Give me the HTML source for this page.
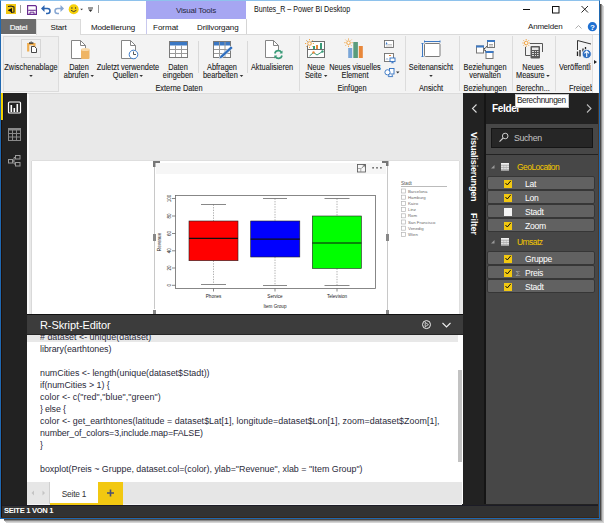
<!DOCTYPE html>
<html><head><meta charset="utf-8">
<style>
*{box-sizing:border-box;margin:0;padding:0}
html,body{width:604px;height:523px;overflow:hidden;background:#fff;font-family:"Liberation Sans",sans-serif;position:relative}
.a{position:absolute}
.t{position:absolute;white-space:nowrap;line-height:1}
.rl{position:absolute;width:120px;text-align:center;font-size:8.4px;line-height:8px;color:#1a1a1a;white-space:nowrap;transform:scaleX(.88);-webkit-text-stroke:.1px #1a1a1a}
.dd{display:inline-block;width:0;height:0;border-left:2px solid transparent;border-right:2px solid transparent;border-top:2px solid #333;margin-left:2px;vertical-align:1px}
.code{font-size:8.9px;color:#2a2a3a;line-height:12px}
.frow{position:absolute;left:487px;width:108px;height:14px;background:#616161;border:1px solid #363636;border-radius:2px}
.chk{position:absolute;left:16px;top:2.5px;width:8px;height:8px;background:#f2c811}
.ftx{position:absolute;left:37px;top:2px;font-size:8.6px;letter-spacing:-.3px;color:#fff;line-height:10px}
</style></head><body>
<div class="a" style="left:600px;top:4px;width:1px;height:516px;background:#4a4846"></div>
<div class="a" style="left:601px;top:4px;width:1px;height:517px;background:#8a8a8a"></div>
<div class="a" style="left:602px;top:5px;width:1px;height:517px;background:#c0c0c0"></div>
<div class="a" style="left:603px;top:6px;width:1px;height:517px;background:#d6d6d6"></div>
<div class="a" style="left:4px;top:519px;width:597px;height:1px;background:#4a4846"></div>
<div class="a" style="left:4px;top:520px;width:598px;height:1px;background:#8a8a8a"></div>
<div class="a" style="left:5px;top:521px;width:598px;height:1px;background:#bebebe"></div>
<div class="a" style="left:6px;top:522px;width:598px;height:1px;background:#d4d4d4"></div>
<div class="a" style="left:0;top:0;width:600px;height:519px;background:#fff"></div>

<!-- TITLE BAR -->
<div class="a" style="left:20px;top:5px;width:1px;height:8px;background:#9a9a9a"></div>
<div class="a" style="left:146px;top:1px;width:100px;height:18px;background:#a6a6f2"></div>
<div class="t" style="left:146px;top:7px;width:100px;text-align:center;font-size:8px;letter-spacing:-.2px;color:#262640">Visual Tools</div>
<div class="t" style="left:254px;top:5px;font-size:8.8px;color:#111;transform-origin:0 0;transform:scaleX(.81)">Buntes_R – Power BI Desktop</div>
<div class="t" style="left:528px;top:23px;font-size:8px;letter-spacing:-.2px;color:#222">Anmelden</div>

<!-- TABS -->
<div class="a" style="left:1px;top:19px;width:35px;height:15px;background:#6b6b6b"></div>
<div class="t" style="left:1px;top:24px;width:35px;text-align:center;font-size:8px;letter-spacing:-.25px;color:#fff;-webkit-text-stroke:.15px #fff">Datei</div>
<div class="a" style="left:36px;top:34px;width:563px;height:1px;background:#dadada"></div>
<div class="a" style="left:36px;top:19px;width:45px;height:16px;background:#f3f3f3;border:1px solid #dadada;border-bottom:none"></div>
<div class="t" style="left:36px;top:24px;width:45px;text-align:center;font-size:8px;letter-spacing:-.2px;color:#111">Start</div>
<div class="t" style="left:91px;top:24px;font-size:8px;letter-spacing:-.15px;color:#111">Modellierung</div>
<div class="a" style="left:146px;top:19px;width:1px;height:15px;background:#c9c9ee"></div>
<div class="a" style="left:246px;top:19px;width:1px;height:15px;background:#d5d5d5"></div>
<div class="t" style="left:153px;top:24px;font-size:8px;color:#111">Format</div>
<div class="t" style="left:197px;top:24px;font-size:8px;letter-spacing:-.1px;color:#111">Drillvorgang</div>

<!-- RIBBON -->
<div class="a" style="left:1px;top:35px;width:598px;height:58px;background:#f3f3f3"></div>
<div class="a" style="left:1px;top:92px;width:598px;height:1px;background:#f5f5f5"></div>
<div class="a" style="left:3px;top:36px;width:56px;height:56px;background:#efefef;border:1px solid #dcdcdc"></div>
<div class="a" style="left:21px;top:39px;width:20px;height:19px;border:1px solid #d6d6d6;background:#f1f1f1"></div>
<div class="a" style="left:592px;top:35px;width:7px;height:58px;background:#fafafa;border-left:1px solid #e0e0e0"></div>
<div class="a" style="left:594px;top:60px;width:0;height:0;border-top:2px solid transparent;border-bottom:2px solid transparent;border-left:3px solid #222"></div>
<div class="rl" style="left:-29.5px;top:63px">Zwischenablage</div>
<div class="rl" style="left:-29.0px;top:71px"><i class="dd" style="margin:0"></i></div>
<div class="rl" style="left:19.0px;top:63px">Daten</div>
<div class="rl" style="left:19.0px;top:71px">abrufen<i class="dd"></i></div>
<div class="rl" style="left:68.2px;top:63px">Zuletzt verwendete</div>
<div class="rl" style="left:68.4px;top:71px">Quellen<i class="dd"></i></div>
<div class="rl" style="left:118.4px;top:63px">Daten</div>
<div class="rl" style="left:118.4px;top:71px">eingeben</div>
<div class="rl" style="left:162.3px;top:63px">Abfragen</div>
<div class="rl" style="left:162.6px;top:71px">bearbeiten<i class="dd"></i></div>
<div class="rl" style="left:212.0px;top:63px">Aktualisieren</div>
<div class="rl" style="left:118.7px;top:84px">Externe Daten</div>
<div class="rl" style="left:255.7px;top:63px">Neue</div>
<div class="rl" style="left:255.8px;top:71px">Seite<i class="dd"></i></div>
<div class="rl" style="left:295.1px;top:63px">Neues visuelles</div>
<div class="rl" style="left:294.5px;top:71px">Element</div>
<div class="rl" style="left:291.7px;top:84px">Einfügen</div>
<div class="rl" style="left:371.0px;top:63px">Seitenansicht</div>
<div class="rl" style="left:371.0px;top:71px"><i class="dd" style="margin:0"></i></div>
<div class="rl" style="left:371.2px;top:84px">Ansicht</div>
<div class="rl" style="left:425.0px;top:63px">Beziehungen</div>
<div class="rl" style="left:424.6px;top:71px">verwalten</div>
<div class="rl" style="left:425.0px;top:84px">Beziehungen</div>
<div class="rl" style="left:473.0px;top:63px">Neues</div>
<div class="rl" style="left:473.3px;top:71px">Measure<i class="dd"></i></div>
<div class="rl" style="left:473.3px;top:84px">Berechn...</div>
<div class="rl" style="left:559px;top:63px;width:36px;text-align:left;overflow:hidden;transform-origin:0 0">Veröffentlichen</div>
<div class="rl" style="left:569px;top:84px;width:25.5px;text-align:left;overflow:hidden;transform-origin:0 0">Freigeben</div>
<svg class="a" style="left:0;top:0" width="604" height="100" viewBox="0 0 604 100">
<g fill="none" stroke-width="1">
<!-- separators -->
<path d="M198.5 41V73M247.5 41V73" stroke="#d9d9d9"/>
<path d="M299.5 36V91M405.5 36V91M459.5 36V91M512.5 36V91M555.5 36V91" stroke="#dcdcdc"/>
<!-- clipboard -->
<path d="M28.2 51.5V44.2H34.4V47" stroke="#f0ae50" stroke-width="2.2" fill="none"/>
<rect x="29" y="42.4" width="4.4" height="1.3" fill="#222" stroke="none"/>
<rect x="30.6" y="41.4" width="1.2" height="1.2" fill="#666" stroke="none"/>
<path d="M31.5 46.5H34.5L36.5 48.5V52.5H31.5Z" fill="#fff" stroke="#333" stroke-width=".9"/>
<!-- daten abrufen -->
<path d="M71.5 40.5H80.5L85.5 45.5V58.5H71.5Z" fill="#fff" stroke="#858585"/>
<path d="M80.5 40.5V45.5H85.5" stroke="#858585"/>
<rect x="81" y="49" width="8.5" height="10" rx="1" fill="#efb564" stroke="none"/>
<ellipse cx="85.25" cy="49.5" rx="4.25" ry="1.5" fill="#f9d9a8" stroke="none"/>
<!-- zuletzt -->
<path d="M121.5 40.5H130.5L135.5 45.5V58.5H121.5Z" fill="#fff" stroke="#858585"/>
<path d="M130.5 40.5V45.5H135.5" stroke="#858585"/>
<circle cx="133.5" cy="54.5" r="4.3" fill="#fff" stroke="#3d7cc9"/>
<path d="M133.5 51.5V54.5H136" stroke="#555"/>
<!-- daten eingeben -->
<rect x="169.5" y="41.5" width="18" height="16" fill="#fff" stroke="#7a7a7a"/>
<rect x="170" y="42" width="17" height="3.5" fill="#3b78c4" stroke="none"/>
<path d="M175.5 45.5V57M181.5 45.5V57M170 49.5H187M170 53.5H187" stroke="#9a9a9a"/>
<!-- abfragen -->
<rect x="213.5" y="41.5" width="17" height="16" fill="#fff" stroke="#7a7a7a"/>
<rect x="214" y="42" width="16" height="3.5" fill="#3b78c4" stroke="none"/>
<path d="M219.5 42V57M225 42V57M214 49.5H230M214 53.5H230" stroke="#9a9a9a"/>
<path d="M219 59L220 56L231 46L233 48L222 58Z" fill="#2f6fc0" stroke="#f3f3f3" stroke-width=".6"/>
<!-- aktualisieren -->
<path d="M265.5 40.5H273.5L278.5 45.5V57.5H265.5Z" fill="#fff" stroke="#858585"/>
<path d="M273.5 40.5V45.5H278.5" stroke="#858585"/>
<circle cx="278.4" cy="54.5" r="4.2" fill="#f3f3f3" stroke="none"/>
<path d="M274.8 53.5A3.6 3.6 0 0 1 281.5 52.5M282 55.5A3.6 3.6 0 0 1 275.3 56.5" stroke="#3a9a78" stroke-width="1.6"/>
<path d="M282.5 50.5V53.5H279.5ZM274.3 58.5V55.5H277.3Z" fill="#3a9a78" stroke="none"/>
<!-- neue seite -->
<rect x="307.5" y="41.5" width="17" height="16" fill="#fff" stroke="#6f6f6f"/>
<path d="M308 49.5H324" stroke="#6f6f6f"/>
<rect x="313" y="46" width="2" height="3" fill="#3a9a78" stroke="none"/>
<rect x="316" y="45" width="2" height="4" fill="#e8873a" stroke="none"/>
<rect x="320" y="43" width="2" height="6" fill="#3a9a78" stroke="none"/>
<path d="M309.5 56L313.5 52.5L317 55L322.5 51.5" stroke="#3a9a78"/>
<circle cx="313.5" cy="52.5" r="1.2" fill="#e8873a" stroke="none"/>
<circle cx="322.5" cy="51.5" r="1.2" fill="#3a9a78" stroke="none"/>
<circle cx="309.5" cy="43.5" r="2.7" fill="#f3f3f3" stroke="none"/>
<g stroke="#f0a64a"><circle cx="309.5" cy="43.5" r="1.8" fill="#fdf6ea"/><path d="M309.5 39V40.2M309.5 46.8V48M305 43.5H306.2M312.8 43.5H314M306.3 40.3L307.1 41.1M311.9 45.9L312.7 46.7M312.7 40.3L311.9 41.1M307.1 45.9L306.3 46.7"/></g>
<!-- neues visuelles element -->
<g stroke="#f0a64a"><circle cx="348.5" cy="42.7" r="1.8" fill="#fdf6ea"/><path d="M348.5 38.5V39.7M348.5 45.7V46.9M344.3 42.7H345.5M351.5 42.7H352.7M345.5 39.7L346.3 40.5M350.7 44.9L351.5 45.7M351.5 39.7L350.7 40.5M346.3 44.9L345.5 45.7"/></g>
<rect x="348.2" y="48" width="4" height="10" fill="#7aa6d8" stroke="none"/>
<rect x="353.3" y="42" width="4.6" height="16" fill="#5a9c7c" stroke="none"/>
<rect x="358.8" y="46" width="4" height="12" fill="#e8873a" stroke="none"/>
<!-- small icons -->
<rect x="384.5" y="40.5" width="9" height="7" fill="#fff" stroke="#6f6f6f" stroke-width=".9"/>
<path d="M388 44.5H392M386 46H392" stroke="#bbb" stroke-width=".8"/>
<path d="M386.6 41.8L385.6 44.6H387.6Z" fill="#3b78c4" stroke="none"/>
<rect x="384.5" y="53.5" width="9" height="8" fill="#fff" stroke="#6f6f6f" stroke-width=".9"/>
<path d="M389 55.5H391" stroke="#e8873a"/>
<rect x="390" y="58" width="5" height="3.6" fill="#fff" stroke="#2f6fc0" stroke-width=".9"/>
<path d="M392.5 61.6V62.8M391.2 62.8H393.8" stroke="#2f6fc0" stroke-width=".8"/>
<path d="M386 60L387 58L388 60" stroke="#aac0e0" stroke-width=".8"/>
<rect x="389.5" y="68.5" width="4.5" height="5.5" fill="#fff" stroke="#2f6fc0" stroke-width=".9"/>
<circle cx="387.5" cy="72.3" r="2.6" fill="#fff" stroke="#2f6fc0" stroke-width=".9"/>
<path d="M389.2 74.5L388.3 76.6H392.7L391.8 74.5" fill="#fff" stroke="#2f6fc0" stroke-width=".9"/>
<path d="M396 71.5H399.5L397.75 73.5Z" fill="#333" stroke="none"/>
<!-- seitenansicht -->
<rect x="424.5" y="43.5" width="15.5" height="13" rx="1" fill="#fff" stroke="#7a7a7a"/>
<path d="M424.5 41.5H440M424.5 40.5V42.5M440 40.5V42.5M422.5 43.5V56.5M421.5 43.5H423.5M421.5 56.5H423.5" stroke="#3b78c4"/>
<!-- beziehungen -->
<path d="M483 48.5H485L488 45M483 50H485L487 53" stroke="#444"/>
<rect x="476.5" y="46" width="7" height="7" fill="#fff" stroke="#777"/><rect x="476" y="45.5" width="8" height="2" fill="#3b78c4"/>
<rect x="487.5" y="40.5" width="7" height="7" fill="#fff" stroke="#777"/><rect x="487" y="40" width="8" height="2" fill="#3b78c4"/>
<rect x="486" y="51.5" width="7" height="7" fill="#fff" stroke="#777"/><rect x="485.5" y="51" width="8" height="2" fill="#3b78c4"/>
<path d="M489 44.5H493M489 46H493" stroke="#aaa"/>
<!-- measure -->
<path d="M525.5 47V55.5H530.5M530 43.5H542.5V52" stroke="#555"/>
<g stroke="#f0a64a"><circle cx="526.2" cy="43" r="1.8" fill="#fdf6ea"/><path d="M526.2 39V40.2M526.2 45.8V47M522.4 43H523.6M528.8 43H530M523.5 40.3L524.3 41.1M528.1 44.9L528.9 45.7M528.9 40.3L528.1 41.1M524.3 44.9L523.5 45.7"/></g>
<rect x="530.5" y="46" width="9.5" height="12.5" rx="1" fill="#5a5a5a" stroke="none"/>
<rect x="532" y="47.5" width="6.5" height="2.5" fill="#e8e8e8" stroke="none"/>
<path d="M532 51.5H534M535 51.5H536M537 51.5H538.5M532 53.5H534M535 53.5H536M537 53.5H538.5M532 55.5H534M535 55.5H536M537 55.5H538.5" stroke="#ddd"/>
<!-- veroffentlichen -->
<path d="M577.5 50V40.5L591 44" stroke="#333"/>
<path d="M577.5 51.5V56M580 50V56.5M583 48.5V52M585.5 47V50" stroke="#222" stroke-width="1.3"/>
<circle cx="586.7" cy="54" r="4.6" fill="#2f6fc0" stroke="#fff" stroke-width=".8"/>
<path d="M586.7 57V51.2M584.4 53.4L586.7 51.1L589 53.4" stroke="#fff" stroke-width="1.1"/>
</g>
</svg>


<!-- DARK BACKGROUND -->
<div class="a" style="left:1px;top:93px;width:598px;height:425px;background:#222"></div>
<div class="a" style="left:1px;top:93px;width:2px;height:27px;background:#f2c811"></div>

<!-- CANVAS -->
<div class="a" style="left:27px;top:93px;width:436px;height:221px;background:#e9e9e9;border-top:1px solid #dcdcdc"></div>
<div class="a" style="left:31px;top:161px;width:429px;height:153px;background:#fff;border-left:1px solid #d9d9d9;border-right:1px solid #dedede"></div>
<div class="a" style="left:27px;top:94px;width:2px;height:220px;background:#f9f9f9"></div>
<svg class="a" style="left:0;top:0" width="604" height="330" viewBox="0 0 604 330">
<!-- canvas top shadow -->
<rect x="32" y="160" width="427" height="1" fill="#dedede"/>
<!-- visual header -->
<rect x="156" y="163" width="230" height="11" fill="#f6f6f6"/>
<!-- visual borders -->
<path d="M154.5 167V309M387.5 166V313" stroke="#c8c8c8" stroke-width="1"/>
<path d="M153 161H160V163H155.5V167H153Z" fill="#777"/>
<path d="M382 161H388.5V166H386V163H382Z" fill="#777"/>
<rect x="153" y="310" width="3" height="4" fill="#888"/>
<rect x="386" y="310" width="3" height="4" fill="#888"/>
<rect x="153" y="234" width="3" height="7" fill="#888"/>
<rect x="386" y="234" width="3" height="7" fill="#888"/>
<!-- focus icon -->
<rect x="357.5" y="164.5" width="8" height="7.5" fill="none" stroke="#5a5a5a" stroke-width=".85"/>
<path d="M358 168.5H360.8V172" fill="none" stroke="#888" stroke-width=".7"/>
<path d="M361.5 168.2L364.8 165M362.8 165H365V167.2" fill="none" stroke="#5a5a5a" stroke-width=".8"/>
<g fill="#666"><rect x="372.3" y="167" width="1.6" height="1.6"/><rect x="376.2" y="167" width="1.6" height="1.6"/><rect x="380.1" y="167" width="1.6" height="1.6"/></g>
<!-- plot -->
<g fill="none" stroke="#6a6a6a" stroke-width=".8">
<rect x="175.5" y="195.5" width="200" height="93"/>
<path d="M172 198.5H175.5M172 216H175.5M172 233.5H175.5M172 250.8H175.5M172 268H175.5M172 285.3H175.5"/>
<path d="M213.5 288.5V291.5M275 288.5V291.5M337 288.5V291.5"/>
</g>
<g fill="none" stroke="#999" stroke-width=".8" stroke-dasharray="1.3 1.3">
<path d="M213.5 204.5V221M213.5 260.7V284.5M275 198.5V221M275 257V285.5M337 198.5V216M337 268.5V285.5"/>
</g>
<g fill="none" stroke="#6a6a6a" stroke-width=".8">
<path d="M201 204.5H226M201 284.5H226M263 198.5H287M263 285.5H287M324.5 198.5H349.5M324.5 285.5H349.5"/>
</g>
<rect x="189" y="221" width="49" height="39.7" fill="#f00" stroke="#222" stroke-width=".6"/>
<rect x="250.7" y="221" width="49.1" height="36" fill="#00f" stroke="#222" stroke-width=".6"/>
<rect x="312.3" y="216" width="49.1" height="52.5" fill="#0f0" stroke="#222" stroke-width=".6"/>
<g stroke="#111" stroke-width="1.2">
<path d="M189 238.3H238M250.7 239.2H299.8M312.3 243H361.4"/>
</g>
<g font-family="Liberation Sans" font-size="4.6" fill="#222" text-anchor="middle">
<text x="213.6" y="297.8">Phones</text>
<text x="275" y="297.8">Service</text>
<text x="337" y="297.8">Television</text>
<text x="275" y="307.6">Item Group</text>
<text transform="translate(161 242) rotate(-90)">Revenue</text>
<g transform="translate(171.3 0)">
<text transform="translate(0 198.5) rotate(-90)">100</text>
<text transform="translate(0 216) rotate(-90)">80</text>
<text transform="translate(0 233.5) rotate(-90)">60</text>
<text transform="translate(0 250.8) rotate(-90)">40</text>
<text transform="translate(0 268) rotate(-90)">20</text>
<text transform="translate(0 285.3) rotate(-90)">0</text>
</g>
</g>
<!-- slicer -->
<g font-family="Liberation Sans" font-size="4.3" fill="#6a6a6a">
<text x="401" y="185" font-size="4.6" fill="#555">Stadt</text>
<path d="M401 186.5H447" stroke="#aaa" stroke-width=".8"/>
<g fill="none" stroke="#b5b5b5" stroke-width=".7">
<rect x="401.5" y="189" width="4" height="4"/><rect x="401.5" y="195.2" width="4" height="4"/><rect x="401.5" y="201.4" width="4" height="4"/><rect x="401.5" y="207.6" width="4" height="4"/><rect x="401.5" y="213.8" width="4" height="4"/><rect x="401.5" y="220" width="4" height="4"/><rect x="401.5" y="226.2" width="4" height="4"/><rect x="401.5" y="232.4" width="4" height="4"/>
</g>
<text x="408" y="192.6">Barcelona</text>
<text x="408" y="198.8">Hamburg</text>
<text x="408" y="205">Kairo</text>
<text x="408" y="211.2">Linz</text>
<text x="408" y="217.4">Rom</text>
<text x="408" y="223.6">San Francisco</text>
<text x="408" y="229.8">Venedig</text>
<text x="408" y="236">Wien</text>
</g>
</svg>


<!-- EDITOR -->
<div class="a" style="left:27px;top:335px;width:436px;height:147px;background:#fff"></div>
<div class="a" style="left:27px;top:335px;width:431px;height:7px;background:#e8e8e8"></div>
<div class="a" style="left:458px;top:370px;width:4px;height:92px;background:#c2c2c2"></div>
<div class="a" style="left:40px;top:331px;width:418px;height:150px;overflow:hidden">
<div class="code" style="position:absolute;left:0;top:0;white-space:pre"># dataset &lt;- unique(dataset)
<span style="letter-spacing:-.03px">library(earthtones)</span>

<span style="letter-spacing:-.01px">numCities &lt;- length(unique(dataset$Stadt))</span>
<span style="letter-spacing:-.03px">if(numCities &gt; 1) {</span>
<span style="letter-spacing:.06px">color &lt;- c("red","blue","green")</span>
<span style="letter-spacing:-.18px">} else {</span>
<span style="letter-spacing:.043px">color &lt;- get_earthtones(latitude = dataset$Lat[1], longitude=dataset$Lon[1], zoom=dataset$Zoom[1],</span>
<span style="letter-spacing:-.12px">number_of_colors=3,include.map=FALSE)</span>
}

<span style="letter-spacing:-.005px">boxplot(Preis ~ Gruppe, dataset.col=(color), ylab="Revenue", xlab = "Item Group")</span></div>
</div>
<div class="a" style="left:27px;top:314px;width:436px;height:21px;background:#3c3c3c;border-top:1px solid #111;border-bottom:1px solid #262626"></div>
<div class="t" style="left:40px;top:320px;font-size:11px;letter-spacing:-.1px;color:#fff">R-Skript-Editor</div>

<!-- PAGE TABS -->
<div class="a" style="left:27px;top:482px;width:435px;height:23px;background:#e6e6e6;border-bottom:1px solid #f4f4f4"></div>
<div class="a" style="left:462px;top:482px;width:1px;height:22px;background:#fff"></div>
<div class="a" style="left:49px;top:482px;width:1px;height:22px;background:#cfcfcf"></div>
<div class="a" style="left:50px;top:482px;width:48px;height:23px;background:#fff;border-bottom:2px solid #f2c811"></div>
<div class="t" style="left:50px;top:490px;width:48px;text-align:center;font-size:8.3px;letter-spacing:-.2px;color:#333">Seite 1</div>
<div class="a" style="left:98px;top:482px;width:25px;height:23px;background:#f2c811"></div>

<!-- STATUS BAR -->
<div class="a" style="left:1px;top:505px;width:598px;height:13px;background:#323232;border-top:1px solid #1c1c26"></div>
<div class="t" style="left:4px;top:507px;font-size:7.6px;font-weight:bold;letter-spacing:-.3px;color:#fff">SEITE 1 VON 1</div>

<!-- RIGHT PANELS -->
<div class="a" style="left:484px;top:93px;width:2px;height:411px;background:#151515"></div>
<div class="a" style="left:486px;top:124px;width:113px;height:380px;background:#474747"></div>
<div class="a" style="left:486px;top:154px;width:113px;height:1px;background:#222"></div>
<div class="a" style="left:491px;top:128px;width:102px;height:20px;background:#262626;border:1px solid #151515"></div>
<div class="t" style="left:514px;top:134px;font-size:8.8px;letter-spacing:-.35px;color:#c4c4c4">Suchen</div>
<div class="t" style="left:492px;top:104px;font-size:10px;font-weight:bold;letter-spacing:-.35px;color:#fff">Felder</div>
<div class="t" style="left:517px;top:163px;font-size:8.5px;letter-spacing:-.55px;color:#f5c800">GeoLocation</div>
<div class="frow" style="top:176px"><div class="chk"></div><div class="ftx">Lat</div></div>
<div class="frow" style="top:190px"><div class="chk"></div><div class="ftx">Lon</div></div>
<div class="frow" style="top:204px"><div class="chk" style="background:#f4f4f4"></div><div class="ftx">Stadt</div></div>
<div class="frow" style="top:218px"><div class="chk"></div><div class="ftx">Zoom</div></div>
<div class="t" style="left:517px;top:238px;font-size:8.5px;letter-spacing:-.55px;color:#f5c800">Umsatz</div>
<div class="frow" style="top:251px"><div class="chk"></div><div class="ftx">Gruppe</div></div>
<div class="frow" style="top:265px"><div class="chk"></div><div class="ftx">Preis</div></div>
<div class="frow" style="top:279px"><div class="chk"></div><div class="ftx">Stadt</div></div>
<div class="t" style="left:470px;top:132px;font-size:9px;font-weight:bold;letter-spacing:-.15px;color:#fff;transform-origin:0 0;transform:translate(8px,0) rotate(90deg)">Visualisierungen</div>
<div class="t" style="left:470px;top:213px;font-size:9px;font-weight:bold;color:#fff;transform-origin:0 0;transform:translate(8px,0) rotate(90deg)">Filter</div>

<svg class="a" style="left:0;top:0" width="604" height="523" viewBox="0 0 604 523">
<!-- logo -->
<rect x="6" y="4" width="10" height="10" fill="#f2c811"/>
<path d="M8 6.5L11 6L14 7V12L11 12.5" fill="none" stroke="#222" stroke-width="1.1"/>
<path d="M8 10L12 8V12.5L8 10.5Z" fill="#111"/>
<!-- save -->
<path d="M27.6 5.6H35.4L36.4 6.6V14.4H27.6Z" fill="none" stroke="#6a2c90" stroke-width="1.2"/>
<path d="M28.2 10.3H35.8" stroke="#6a2c90" stroke-width="1.1"/>
<path d="M30 14.2V12.2H34V14.2" fill="none" stroke="#6a2c90" stroke-width="1"/>
<!-- undo -->
<path d="M43 8.5H47.5A2.5 2.5 0 0 1 47.5 13.5H46" fill="none" stroke="#2a63b0" stroke-width="1.5"/>
<path d="M41 8.5L44.5 5V12Z" fill="#2a63b0"/>
<!-- redo -->
<path d="M62 8.5H57.5A2.5 2.5 0 0 0 57.5 13.5H59" fill="none" stroke="#86a6d2" stroke-width="1.5"/>
<path d="M64 8.5L60.5 5V12Z" fill="#86a6d2"/>
<!-- smiley -->
<circle cx="73.7" cy="9.2" r="5" fill="#f6d10a"/>
<circle cx="71.9" cy="8" r=".7" fill="#334"/><circle cx="75.5" cy="8" r=".7" fill="#334"/>
<path d="M71 10.3Q73.7 13 76.4 10.3" fill="none" stroke="#333" stroke-width=".9"/>
<path d="M80.3 8.7H83L81.65 10.2Z" fill="#333"/>
<path d="M88 8H93" stroke="#333"/><path d="M88.3 9.5H92.7L90.5 12Z" fill="#333"/>
<path d="M98.5 5V13" stroke="#999"/>
<!-- window controls -->
<path d="M523 9.5H530" stroke="#111"/>
<rect x="552.5" y="6.5" width="6.5" height="6.5" fill="none" stroke="#111"/>
<path d="M581.5 6L588 12.5M588 6L581.5 12.5" stroke="#111" stroke-width=".9"/>
<path d="M575.5 28.5L578.5 25.5L581.5 28.5" fill="none" stroke="#999" stroke-width=".8"/>
<circle cx="592.4" cy="26.7" r="4.6" fill="#1e70d2"/>
<text x="592.4" y="29.6" font-family="Liberation Sans" font-size="8" font-weight="bold" fill="#fff" text-anchor="middle">?</text>
<!-- left nav -->
<rect x="8.5" y="102" width="12" height="11" rx="1" fill="none" stroke="#fff" stroke-width="1.2"/>
<rect x="10.5" y="105" width="1.6" height="7" fill="#fff"/><rect x="13.5" y="108" width="1.6" height="4" fill="#fff"/><rect x="16.5" y="104" width="1.6" height="8" fill="#fff"/>
<rect x="8.5" y="128.5" width="12" height="12" fill="none" stroke="#8a8a8a"/>
<rect x="8.5" y="128.5" width="12" height="2" fill="#8a8a8a"/>
<path d="M12.5 130V140M16.5 130V140M9 133.5H20M9 137H20" stroke="#8a8a8a"/>
<g fill="none" stroke="#9a9a9a"><rect x="8.5" y="159.5" width="4" height="3.5"/><rect x="15.5" y="155.5" width="4.5" height="3.5"/><rect x="15.5" y="162.5" width="4.5" height="3.5"/><path d="M12.5 161H14V157.5H15.5M14 161V164H15.5"/></g>
<!-- editor header icons -->
<circle cx="426.5" cy="324.6" r="4" fill="none" stroke="#eee" stroke-width="1"/>
<path d="M425.2 322.4V326.8L428.4 324.6Z" fill="none" stroke="#eee" stroke-width=".8"/>
<path d="M442.5 323L446.5 327L450.5 323" fill="none" stroke="#eee" stroke-width="1.1"/>
<!-- page tab arrows & plus -->
<path d="M34 490.5V495.5L31.5 493Z" fill="#c4c4c4"/>
<path d="M42.5 490.5V495.5L45 493Z" fill="#c4c4c4"/>
<path d="M110.5 489.5V496.5M107 493H114" stroke="#4a5070" stroke-width="1.6"/>
<!-- right panel chevrons -->
<path d="M476.5 104.5L472.5 108.5L476.5 112.5" fill="none" stroke="#ddd" stroke-width="1.1"/>
<path d="M587 104.5L591 108.5L587 112.5" fill="none" stroke="#bbb" stroke-width="1.1"/>
<!-- magnifier -->
<circle cx="505.2" cy="136" r="2.8" fill="none" stroke="#ccc" stroke-width="1"/>
<path d="M503.2 138L499.5 141.7" stroke="#ccc" stroke-width="1.1"/>
<!-- geo / umsatz headers -->
<path d="M491 168.5L494.5 165V168.5Z" fill="#999"/>
<path d="M491 243.5L494.5 240V243.5Z" fill="#999"/>
<rect x="501" y="163" width="8" height="7.5" fill="#f0f0f0"/>
<rect x="501" y="238" width="8" height="7.5" fill="#f0f0f0"/>
<path d="M501 165.2H509M501 167.3H509M501 169.3H509M501 240.2H509M501 242.3H509M501 244.3H509" stroke="#777" stroke-width=".6"/>
<path d="M503.7 165V170.5M506.3 165V170.5M503.7 240V245.5M506.3 240V245.5" stroke="#aaa" stroke-width=".5"/>
<!-- checkmarks -->
<g fill="none" stroke="#111" stroke-width="1">
<path d="M505.5 183L507.3 185L510.8 180.8"/>
<path d="M505.5 197L507.3 199L510.8 194.8"/>
<path d="M505.5 225L507.3 227L510.8 222.8"/>
<path d="M505.5 258L507.3 260L510.8 255.8"/>
<path d="M505.5 272L507.3 274L510.8 269.8"/>
<path d="M505.5 286L507.3 288L510.8 283.8"/>
</g>
<text x="515.5" y="276" font-family="Liberation Sans" font-size="8" fill="#aaa">Σ</text>
</svg>


<!-- TOOLTIP -->
<div class="a" style="left:515px;top:94px;width:54px;height:14px;background:#fff;border:1px solid #c8c8c8"></div>
<div class="t" style="left:517px;top:97px;font-size:8.2px;letter-spacing:-.38px;color:#222">Berechnungen</div>

<!-- WINDOW BORDER -->
<div class="a" style="left:0;top:0;width:600px;height:519px;border:1px solid #1f68b0;border-top-color:#8ec2ec"></div>
<div class="a" style="left:1px;top:120px;width:1px;height:398px;background:#201008"></div>
<div class="a" style="left:1px;top:93px;width:2px;height:27px;background:#f2d200"></div>
<div class="a" style="left:3px;top:93px;width:1px;height:27px;background:#101030"></div>
<div class="a" style="left:598px;top:93px;width:1px;height:425px;background:#4a3828"></div>
<div class="a" style="left:1px;top:517px;width:598px;height:1px;background:#3a2616"></div>
</body></html>
